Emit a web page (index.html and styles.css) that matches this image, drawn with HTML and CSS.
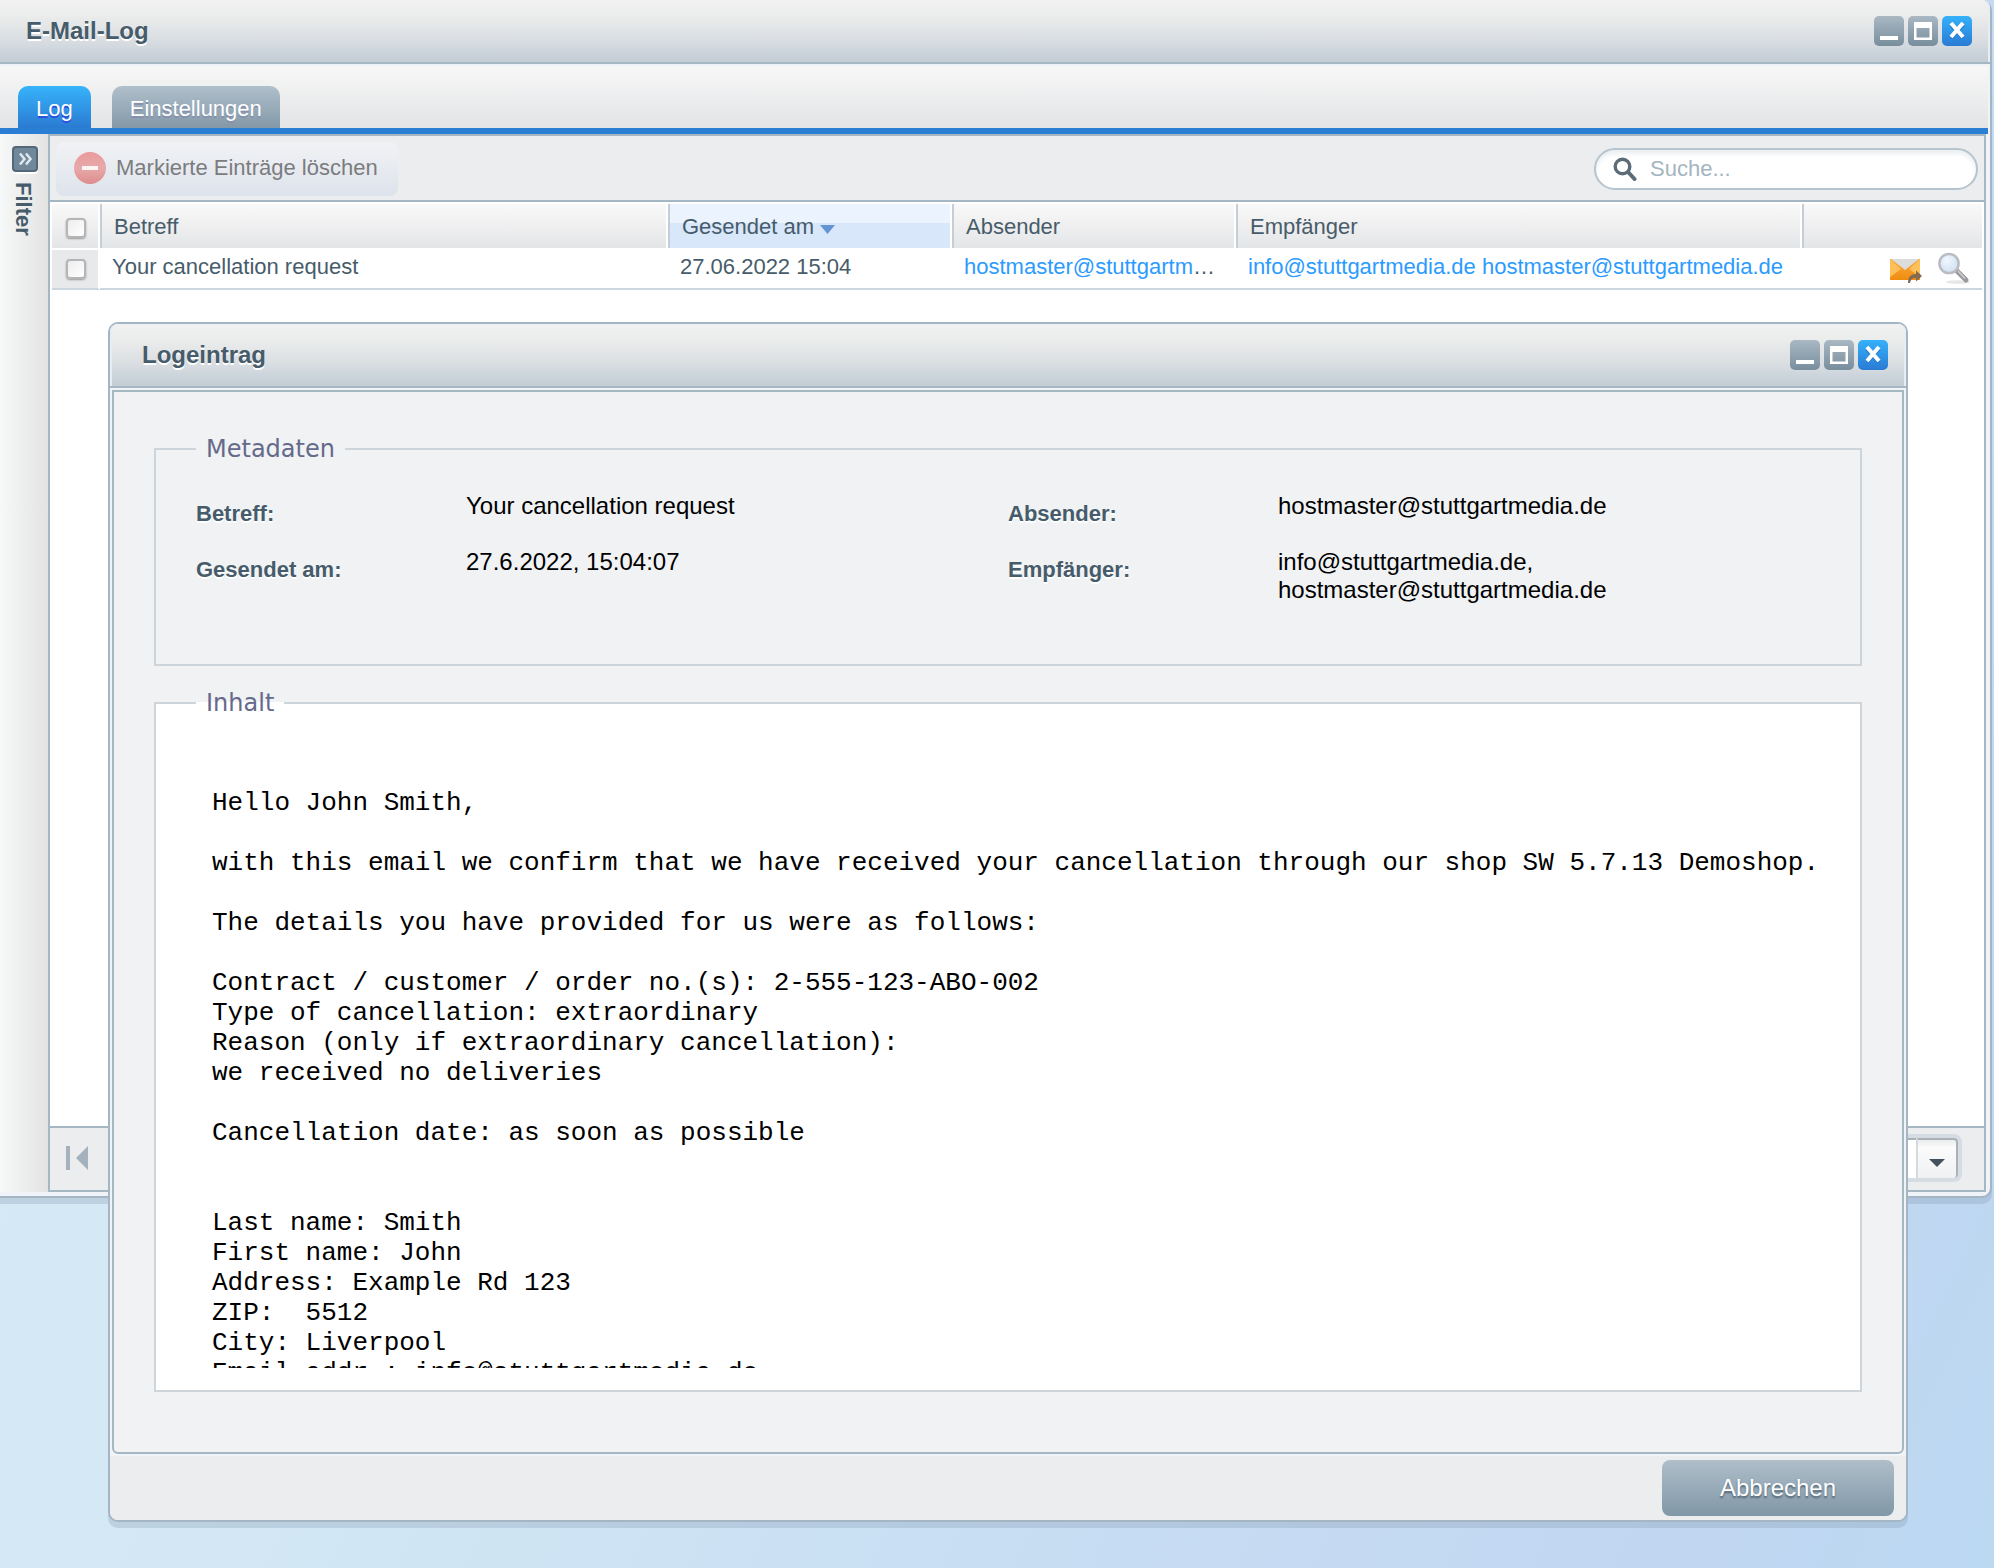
FILE: index.html
```html
<!DOCTYPE html>
<html lang="de">
<head>
<meta charset="utf-8">
<title>E-Mail-Log</title>
<link rel="stylesheet" href="styles.css">
</head>
<body>
<svg class="defs" width="0" height="0" aria-hidden="true">
  <defs>
    <linearGradient id="g-grey" x1="0" y1="0" x2="0" y2="1"><stop offset="0" stop-color="#a9b8c3"/><stop offset="1" stop-color="#788e9d"/></linearGradient>
    <linearGradient id="g-blue" x1="0" y1="0" x2="0" y2="1"><stop offset="0" stop-color="#35b1fa"/><stop offset="1" stop-color="#2a7bd4"/></linearGradient>
    <linearGradient id="g-red" x1="0" y1="0" x2="0" y2="1"><stop offset="0" stop-color="#e99a9c"/><stop offset=".5" stop-color="#e8a9aa"/><stop offset="1" stop-color="#de8c8c"/></linearGradient>
    <linearGradient id="g-mail" x1="0" y1="0" x2="0" y2="1"><stop offset="0" stop-color="#fba93c"/><stop offset="1" stop-color="#f08c10"/></linearGradient>
    <radialGradient id="g-lens" cx=".4" cy=".35" r=".7"><stop offset="0" stop-color="#f0f6fe"/><stop offset="1" stop-color="#cfe0f4"/></radialGradient>
    <symbol id="i-min" viewBox="0 0 30 30"><rect width="30" height="30" rx="5" fill="url(#g-grey)"/><rect x="6" y="20" width="18" height="4" fill="#fff"/></symbol>
    <symbol id="i-max" viewBox="0 0 30 30"><rect width="30" height="30" rx="5" fill="url(#g-grey)"/><path fill="#fff" fill-rule="evenodd" d="M6 6h18v18H6zM8.500 12v9.500h13V12z"/></symbol>
    <symbol id="i-close" viewBox="0 0 30 30"><rect width="30" height="30" rx="5" fill="url(#g-blue)"/><path d="M9 9l12 13M21 9l-12 13" stroke="#1d62b0" stroke-width="4" opacity=".5"/><path d="M9 7l12 14M21 7L9 21" stroke="#fff" stroke-width="4"/></symbol>
  </defs>
</svg>

<div class="desktop">
  <section class="window window-main" aria-label="E-Mail-Log">
    <header class="titlebar">
      <h1 class="title">E-Mail-Log</h1>
      <div class="tools">
        <button class="tool" type="button" aria-label="Minimieren"><svg><use href="#i-min"/></svg></button>
        <button class="tool" type="button" aria-label="Maximieren"><svg><use href="#i-max"/></svg></button>
        <button class="tool" type="button" aria-label="Schließen"><svg><use href="#i-close"/></svg></button>
      </div>
    </header>
    <nav class="tabs">
      <button class="tab tab-active" type="button">Log</button>
      <button class="tab" type="button">Einstellungen</button>
    </nav>
    <div class="workspace">
      <aside class="filter">
        <button class="expand" type="button" aria-label="Filter öffnen"><svg viewBox="0 0 26 26"><path d="M8 7.500l4.500 5.500L8 18.500M14 7.500l4.500 5.500-4.500 5.500" fill="none" stroke="#dfe8ee" stroke-width="2.500"/></svg></button>
        <span class="filter-label">Filter</span>
      </aside>
      <div class="panel">
        <div class="toolbar">
          <button class="delete" type="button" disabled>
            <svg viewBox="0 0 32 32"><circle cx="16" cy="16" r="16" fill="url(#g-red)"/><rect x="8" y="14" width="16" height="4" fill="#fdf4f4"/></svg>
            Markierte Einträge löschen
          </button>
          <label class="search">
            <svg viewBox="0 0 24 24"><path d="M15.500 15.500l6 6.500" stroke="#5c6b78" stroke-width="4" stroke-linecap="round"/><circle cx="9.500" cy="9.500" r="7.300" fill="#fff" stroke="#5c6b78" stroke-width="3.400"/></svg>
            <input type="text" placeholder="Suche..." aria-label="Suche">
          </label>
        </div>
        <table class="grid">
          <colgroup><col class="c-check"><col class="c-subject"><col class="c-date"><col class="c-from"><col class="c-to"><col></colgroup>
          <thead>
            <tr>
              <th class="check"><input type="checkbox" aria-label="Alle auswählen"></th>
              <th>Betreff</th>
              <th class="sorted">Gesendet am <svg viewBox="0 0 15 9"><path d="M0 0h15L7.500 9z" fill="#6594d4"/></svg></th>
              <th>Absender</th>
              <th>Empfänger</th>
              <th></th>
            </tr>
          </thead>
          <tbody>
            <tr>
              <td class="check"><input type="checkbox" aria-label="Eintrag auswählen"></td>
              <td>Your cancellation request</td>
              <td>27.06.2022 15:04</td>
              <td><a href="#">hostmaster@stuttgartmedia.de</a></td>
              <td><a href="#">info@stuttgartmedia.de</a> <a href="#">hostmaster@stuttgartmedia.de</a></td>
              <td class="actions"><div class="action-list">
                <button type="button" aria-label="Erneut senden"><svg viewBox="0 0 32 32"><path d="M0 7h30v21H0z" fill="url(#g-mail)"/><path d="M0 7l11 10L0 25zM30 7L19 17l11 8z" fill="#fdc05a"/><path d="M1 7h28L15 18z" fill="#dcdcda"/><path d="M18 31c0-6 3-9 8-9v-3.500l6 5.500-6 5.500V26c-4 0-5 1-6 5z" fill="#856a52"/></svg></button>
                <button type="button" aria-label="Details anzeigen"><svg viewBox="0 0 32 32"><ellipse cx="20" cy="30" rx="12" ry="1.800" fill="#e6e6e6"/><path d="M18 18l10 10" stroke="#9a9a9e" stroke-width="5" stroke-linecap="round"/><path d="M20 19l7 7.500" stroke="#d0d0d4" stroke-width="1.500"/><circle cx="11" cy="11.500" r="9.600" fill="url(#g-lens)" stroke="#b9bcc0" stroke-width="2.500"/></svg></button>
              </div></td>
            </tr>
          </tbody>
        </table>
        <footer class="pager">
          <button class="first" type="button" aria-label="Erste Seite" disabled><svg viewBox="0 0 24 24"><path d="M1 0h4v24H1zM23 0v24L11 12z" fill="#a5b2be"/></svg></button>
          <div class="combo">
            <input type="text" aria-label="Einträge pro Seite">
            <button type="button" aria-label="Auswahl öffnen"><svg viewBox="0 0 16 8"><path d="M0 0h16L8 8z" fill="#44525f"/></svg></button>
          </div>
        </footer>
      </div>
    </div>
  </section>

  <section class="window window-dialog" role="dialog" aria-label="Logeintrag">
    <header class="titlebar">
      <h2 class="title">Logeintrag</h2>
      <div class="tools">
        <button class="tool" type="button" aria-label="Minimieren"><svg><use href="#i-min"/></svg></button>
        <button class="tool" type="button" aria-label="Maximieren"><svg><use href="#i-max"/></svg></button>
        <button class="tool" type="button" aria-label="Schließen"><svg><use href="#i-close"/></svg></button>
      </div>
    </header>
    <div class="dialog-body">
      <fieldset class="group">
        <legend>Metadaten</legend>
        <dl class="meta">
          <div class="field"><dt>Betreff:</dt><dd>Your cancellation request</dd></div>
          <div class="field"><dt>Absender:</dt><dd>hostmaster@stuttgartmedia.de</dd></div>
          <div class="field"><dt>Gesendet am:</dt><dd>27.6.2022, 15:04:07</dd></div>
          <div class="field"><dt>Empfänger:</dt><dd>info@stuttgartmedia.de,<br>hostmaster@stuttgartmedia.de</dd></div>
        </dl>
      </fieldset>
      <fieldset class="group group-content">
        <legend>Inhalt</legend>
        <pre class="mail">Hello John Smith,

with this email we confirm that we have received your cancellation through our shop SW 5.7.13 Demoshop.

The details you have provided for us were as follows:

Contract / customer / order no.(s): 2-555-123-ABO-002
Type of cancellation: extraordinary
Reason (only if extraordinary cancellation):
we received no deliveries

Cancellation date: as soon as possible


Last name: Smith
First name: John
Address: Example Rd 123
ZIP:  5512
City: Liverpool
Email addr.: info@stuttgartmedia.de</pre>
      </fieldset>
    </div>
    <footer class="dialog-footer">
      <button class="cancel" type="button">Abbrechen</button>
    </footer>
  </section>
</div>
</body>
</html>
```
FILE: styles.css
```css
* { box-sizing: border-box; }

body {
  margin: 0;
  font: 22px/28px Arial, "Liberation Sans", sans-serif;
  color: #475c6a;
}

button, input { font: inherit; color: inherit; }
button { margin: 0; padding: 0; border: 0; background: none; }
svg { display: block; }
.defs { position: absolute; }

.desktop {
  position: relative;
  height: 100vh;
  min-height: 900px;
  overflow: hidden;
  background: linear-gradient(115deg, #d7ebf7 0%, #d3e8f4 35%, #c9dff3 60%, #c1d6f1 88%, #bcd9f2 100%);
}

/* Windows */
.window {
  position: absolute;
  display: flex;
  flex-direction: column;
  border: 2px solid #a4b5c3;
  background: #f0f4f8;
  box-shadow: 0 6px 0 rgba(120, 140, 165, .25);
}
.window-main {
  inset: 0 2px 370px 0;
  border-width: 0 2px 2px 0;
  border-radius: 0 10px 10px 0;
}
.window-dialog {
  inset: 322px 86px 46px 108px;
  border-radius: 10px;
}

.titlebar {
  display: flex;
  flex: none;
  align-items: center;
  justify-content: space-between;
  height: 64px;
  padding: 0 18px 0 26px;
  border-bottom: 2px solid #a4b7c2;
  border-radius: 8px 8px 0 0;
  background: linear-gradient(#f1f1f1, #ebecec 25%, #dce0e3 60%, #cdd5dc 82%, #c5cdd4);
  box-shadow: inset -2px 0 0 #e9edf1;
}
.window-main .titlebar { border-radius: 0 8px 0 0; }
.window-dialog .titlebar {
  padding-left: 32px;
  box-shadow: inset -2px 0 0 #e9edf1, inset 2px 0 0 #e9edf1;
}
.title {
  margin: 0;
  font-size: 24px;
  font-weight: bold;
  text-shadow: 0 2px 0 #fff;
}
.tools { display: flex; gap: 4px; }
.tool, .tool svg { display: block; width: 30px; height: 30px; }

/* Tabs */
.tabs {
  display: flex;
  flex: none;
  align-items: flex-end;
  gap: 21px;
  height: 70px;
  margin-right: 2px;
  padding-left: 18px;
  border-top: 2px solid #edf3f7;
  border-bottom: 6px solid #2a7fd4;
  background: linear-gradient(#f7f7f7, #e3e4e6);
}
.tab {
  height: 42px;
  padding: 4px 18px 0;
  border-radius: 10px 10px 0 0;
  background: linear-gradient(#b0c0cb, #8398a8);
  color: #fff;
  text-shadow: 0 2px 0 #8490ac;
}
.tab-active {
  background: linear-gradient(#37b3fb, #2a7bd2);
  text-shadow: 0 2px 0 #2c4be0;
}

.workspace { display: flex; flex: 1; min-height: 0; margin: 0 4px 4px 0; }

.filter {
  display: flex;
  flex: none;
  flex-direction: column;
  align-items: center;
  gap: 10px;
  width: 48px;
  padding: 12px 0 0 2px;
  background: linear-gradient(90deg, #f7f8f8, #e3e3e3);
}
.expand {
  width: 26px;
  height: 26px;
  border: 2px solid #536779;
  border-radius: 4px;
  background: #71889a;
  box-shadow: 0 2px 0 #fff;
}
.expand svg { width: 26px; height: 26px; margin: -2px; }
.filter-label { padding-right: 4px; writing-mode: vertical-rl; font-weight: bold; line-height: 24px; }

.panel {
  display: flex;
  flex: 1;
  flex-direction: column;
  min-width: 0;
  border: 2px solid #a4b7c2;
  background: #fff;
}

.toolbar {
  display: flex;
  flex: none;
  align-items: center;
  justify-content: space-between;
  height: 66px;
  padding: 2px 6px 0;
  border-bottom: 2px solid #a4b7c2;
  background: #ebedef;
}
.delete {
  display: flex;
  align-items: center;
  gap: 10px;
  height: 54px;
  padding: 0 20px 2px 18px;
  border-radius: 8px;
  background: linear-gradient(#f1f2f4, #dde3ec);
  color: #7b7c7e;
}
.delete svg { width: 32px; height: 32px; }
.search {
  display: flex;
  align-items: center;
  gap: 13px;
  width: 384px;
  height: 42px;
  padding: 0 17px;
  border: 2px solid #b5c4cf;
  border-radius: 21px;
  background: #fff;
  box-shadow: inset 0 4px 4px #eceff1;
}
.search svg { flex: none; width: 24px; height: 24px; }
.search input { flex: 1; min-width: 0; padding: 0; border: 0; outline: 0; background: none; }
.search input::placeholder { color: #a4b5c1; opacity: 1; }

/* Log grid */
.grid {
  width: calc(100% - 4px);
  margin: 2px 2px auto;
  table-layout: fixed;
  border-spacing: 0;
}
.c-check { width: 48px; }
.c-subject { width: 568px; }
.c-date, .c-from { width: 284px; }
.c-to { width: 566px; }
.grid th {
  height: 44px;
  padding: 2px 0 0 12px;
  border-right: 2px solid #fff;
  border-left: 2px solid #c5cdd6;
  background: linear-gradient(#f9f9f9, #e4e5e7);
  font-weight: normal;
  text-align: left;
}
.grid th.sorted { background: linear-gradient(#eaf3fe 44%, #d9e7fa 44%); }
.grid th:last-child { border-right: 0; }
.sorted svg { display: inline-block; width: 15px; height: 9px; }
.grid td {
  height: 42px;
  padding: 0 16px 2px 12px;
  overflow: hidden;
  border-bottom: 2px solid #ccd6de;
  text-overflow: ellipsis;
  white-space: nowrap;
}
.grid .check {
  padding: 4px 0 0 2px;
  border-left: 0;
  border-right: 2px solid #fff;
  text-align: center;
}
.grid td.check {
  padding: 0 0 0 2px;
  border-top: 2px solid #fff;
  background: #e8e9eb;
}
.check input {
  display: block;
  width: 20px;
  height: 20px;
  margin: 0 auto;
  appearance: none;
  border: 2px solid #b5b5b5;
  border-radius: 4px;
  background: linear-gradient(135deg, #ededed, #fff);
  box-shadow: 0 1px 2px #999;
}
.grid a { color: #2b9bff; text-decoration: none; }
.grid td.actions { padding: 0; }
.action-list { display: flex; justify-content: flex-end; gap: 16px; padding-right: 12px; }
.action-list svg { width: 32px; height: 32px; }

.pager {
  display: flex;
  flex: none;
  align-items: center;
  justify-content: space-between;
  height: 64px;
  padding: 0 22px 2px 14px;
  border-top: 2px solid #a4b7c2;
  background: #ebedef;
}
.first svg { width: 26px; height: 24px; }
.combo {
  display: flex;
  width: 200px;
  height: 48px;
  border: 4px solid #d5dce3;
  border-radius: 8px;
  background: #fff;
}
.combo input { flex: 1; min-width: 0; border: 0; border-top: 2px solid #a9b2b8; background: none; }
.combo button {
  display: flex;
  align-items: center;
  justify-content: center;
  width: 42px;
  padding: 8px 0 0;
  border: 2px solid #a9b2b8;
  border-bottom: 0;
  border-left-color: #d5dade;
  border-radius: 0 4px 4px 0;
  background: linear-gradient(#e9ebed, #fbfbfb 20%, #f0f1f3);
}
.combo svg { width: 16px; height: 8px; }

/* Log entry dialog */
.dialog-body {
  display: flex;
  flex: 1;
  flex-direction: column;
  gap: 22px;
  min-height: 0;
  margin: 2px 2px 0;
  padding: 42px 40px 60px;
  border: 2px solid #a4b7c2;
  border-radius: 0 0 6px 6px;
  background: #f0f2f4;
}
.group {
  min-width: 0;
  margin: 0;
  padding: 28px 40px 60px;
  border: 2px solid #ced5da;
}
.group legend {
  padding: 0 10px;
  color: #65698a;
  font: 24px/30px Verdana, "DejaVu Sans", sans-serif;
}
.meta {
  display: grid;
  grid-template-columns: 1fr 1fr;
  row-gap: 20px;
  margin: 0;
  color: #000;
  font-size: 24px;
}
.field { display: grid; grid-template-columns: 270px 1fr; }
.field dt {
  padding-top: 8px;
  color: #475c6a;
  font-size: 22px;
  font-weight: bold;
  text-shadow: 0 2px 0 #fff;
}
.field dd { margin: 0; }
.group-content {
  display: flex;
  flex: 1;
  flex-direction: column;
  min-height: 0;
  padding: 70px 16px 22px 40px;
  background: #fff;
}
.mail {
  flex: 1 1 0;
  min-height: 0;
  margin: 0;
  padding-left: 16px;
  overflow: hidden;
  color: #000;
  font: 26px/30px "Courier New", "Liberation Mono", monospace;
}
.dialog-footer {
  display: flex;
  flex: none;
  align-items: center;
  justify-content: flex-end;
  height: 64px;
  margin-top: 2px;
  padding: 0 12px;
  border-radius: 0 0 8px 8px;
  background: #ebedef;
}
.cancel {
  width: 232px;
  height: 56px;
  border-radius: 8px;
  background: linear-gradient(#afbec9, #8097a7);
  color: #fff;
  font-size: 24px;
  text-shadow: 0 2px 2px #4d6170;
}
```
